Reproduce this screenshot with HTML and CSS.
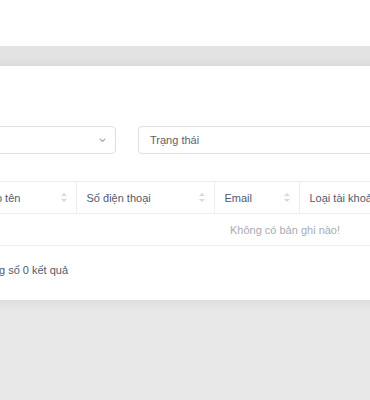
FILE: index.html
```html
<!DOCTYPE html>
<html lang="vi">
<head>
  <meta charset="utf-8">
  <title>Danh sách tài khoản</title>
  <link rel="stylesheet" href="styles.css">
</head>
<body>
  <header class="topbar"></header>
  <main class="content">
    <section class="card">
      <div class="filters">
        <div class="select select-wide">
          <span class="select-value"></span>
          <svg class="chevron" width="7" height="5" viewBox="0 0 7 5"><path d="M1 1l2.5 2.5L6 1" fill="none" stroke="#a8abb2" stroke-width="1.1" stroke-linecap="round" stroke-linejoin="round"/></svg>
        </div>
        <div class="select select-status">
          <span class="select-value">Trạng thái</span>
        </div>
      </div>

      <table class="table">
        <thead>
          <tr>
            <th class="col-name"><div class="th-inner">Họ tên<span class="sort"></span></div></th>
            <th class="col-phone"><div class="th-inner">Số điện thoại<span class="sort"></span></div></th>
            <th class="col-email"><div class="th-inner">Email<span class="sort"></span></div></th>
            <th class="col-type"><div class="th-inner">Loại tài khoản<span class="sort"></span></div></th>
          </tr>
        </thead>
        <tbody>
          <tr>
            <td class="empty" colspan="4">Không có bản ghi nào!</td>
          </tr>
        </tbody>
      </table>

      <footer class="total">Tổng số 0 kết quả</footer>
    </section>
  </main>
</body>
</html>
```

FILE: styles.css
```css
*, *::before, *::after {
  margin: 0;
  padding: 0;
  box-sizing: border-box;
}

body {
  min-height: 100vh;
  overflow: hidden;
  background-color: #e8e8e8;
  color: #303133;
  font-family: "Liberation Sans", Arial, sans-serif;
  font-size: 11px;
}

.topbar {
  height: 46px;
  background-color: #ffffff;
}

.content {
  padding-top: 20px;
  background-color: #e3e3e3;
}

.card {
  width: 660px;
  margin-left: -40px;
  padding: 60px 20px 0;
  height: 234px;
  background-color: #ffffff;
  box-shadow: 0 2px 12px rgba(0, 0, 0, 0.08);
}

.filters {
  display: flex;
  gap: 22px;
}

.select {
  display: flex;
  align-items: center;
  height: 28px;
  padding: 0 11px;
  border: 1px solid #dcdfe6;
  border-radius: 4px;
  color: #606266;
}

.select-wide {
  width: 136px;
  justify-content: flex-end;
}

.select-status {
  width: 260px;
}

.chevron {
  margin-right: -2px;
}

.table {
  width: 610px;
  margin-top: 27px;
  border-collapse: collapse;
  table-layout: fixed;
}

.table th {
  height: 32px;
  padding: 0 9px 0 10px;
  border-top: 1px solid #ebeef5;
  border-bottom: 1px solid #ebeef5;
  text-align: left;
  font-weight: normal;
  color: #515a6e;
}

.table th + th {
  border-left: 1px solid #ebeef5;
}

.table th.col-name {
  padding-left: 8px;
}

.col-name { width: 96px; }
.col-phone { width: 138px; }
.col-email { width: 85px; }

.th-inner {
  display: flex;
  align-items: center;
  justify-content: space-between;
  white-space: nowrap;
}

.sort {
  position: relative;
  flex-shrink: 0;
  width: 6px;
  height: 9px;
}

.sort::before, .sort::after {
  content: "";
  position: absolute;
  left: 0;
  border-left: 3px solid transparent;
  border-right: 3px solid transparent;
}

.sort::before {
  top: 0;
  border-bottom: 3.5px solid #d5d8de;
}

.sort::after {
  bottom: 0;
  border-top: 3.5px solid #d5d8de;
}

.empty {
  height: 32px;
  border-bottom: 1px solid #ebeef5;
  text-align: center;
  color: #a8abb2;
}

.total {
  padding-top: 18px;
  color: #515a6e;
}
```
